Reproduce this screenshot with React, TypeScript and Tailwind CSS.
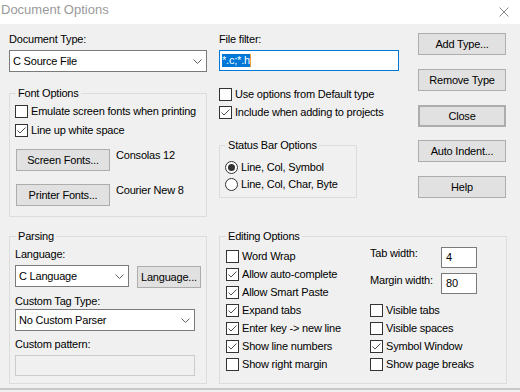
import type { ReactNode } from 'react'

function Check({ checked }: { checked?: boolean }) {
  return (
    <span className="flex h-[13px] w-[13px] shrink-0 items-center justify-center border border-[#333333] bg-white">
      {checked && (
        <svg width="11" height="11" viewBox="0 0 11 11">
          <path d="M1.5 5.5 L4 8 L9.5 2.5" fill="none" stroke="#3c3c3c" strokeWidth="0.9" />
        </svg>
      )}
    </span>
  )
}

function CheckRow({ label, checked, className = '' }: { label: string; checked?: boolean; className?: string }) {
  return (
    <div className={`flex h-[13px] items-center gap-[3px] ${className}`}>
      <Check checked={checked} />
      <span className="whitespace-nowrap">{label}</span>
    </div>
  )
}

function RadioRow({ label, on, className = '' }: { label: string; on?: boolean; className?: string }) {
  return (
    <div className={`flex h-[13px] items-center gap-[3px] ${className}`}>
      <span className="flex h-[13px] w-[13px] shrink-0 items-center justify-center rounded-full border border-[#333333] bg-white">
        {on && <span className="h-[7px] w-[7px] rounded-full bg-[#333333]" />}
      </span>
      <span className="whitespace-nowrap">{label}</span>
    </div>
  )
}

function Btn({ children, className = '' }: { children: ReactNode; className?: string }) {
  return (
    <button
      type="button"
      className={`flex h-[22px] shrink-0 items-center justify-center overflow-hidden whitespace-nowrap border border-[#adadad] bg-[#e1e1e1] ${className}`}
    >
      {children}
    </button>
  )
}

function Combo({ value, className = '' }: { value: string; className?: string }) {
  return (
    <div className={`flex h-[22px] items-center justify-between border border-[#7a7a7a] bg-white pl-[3px] pr-[4px] ${className}`}>
      <span className="whitespace-nowrap">{value}</span>
      <svg width="9" height="5" viewBox="0 0 9 5">
        <path d="M0.5 0.5 L4.5 4.5 L8.5 0.5" fill="none" stroke="#606060" strokeWidth="1" />
      </svg>
    </div>
  )
}

function Group({ label, className = '', children }: { label: string; className?: string; children: ReactNode }) {
  return (
    <div className={`border border-[#dcdcdc] ${className}`}>
      <div className="-mt-[7px] ml-[6px] w-fit bg-[#f0f0f0] px-[2px]">{label}</div>
      {children}
    </div>
  )
}

export default function App() {
  return (
    <div className="h-[392px] w-[520px] overflow-hidden bg-[#f0f0f0] font-['Liberation_Sans',Arial,sans-serif] text-[11px] leading-[13px] tracking-[-0.2px] text-black">
      <div className="flex h-[24px] items-start justify-between bg-white">
        <span className="pl-[1px] pt-[2px] text-[13px] leading-[16px] tracking-normal text-[#9a9a9a]">
          Document Options
        </span>
        <svg className="mr-[11px] mt-[7px]" width="10" height="10" viewBox="0 0 10 10">
          <path d="M0.5 0.5 L9.5 9.5 M9.5 0.5 L0.5 9.5" fill="none" stroke="#8a8a8a" strokeWidth="1" />
        </svg>
      </div>

      <div className="h-[366px] border-b-2 border-[#c8c8c8] pl-[9px] pt-[9px]">
        <div className="flex items-start">
          {/* left column */}
          <div className="flex w-[198px] flex-col">
            <div>Document Type:</div>
            <Combo value="C Source File" className="mt-[4px]" />
            <Group label="Font Options" className="mt-[21px] h-[124px]">
              <div className="pl-[5px]">
                <CheckRow label="Emulate screen fonts when printing" className="mt-[5px]" />
                <CheckRow label="Line up white space" checked className="mt-[6px]" />
                <div className="ml-[1px] mt-[12px] flex items-start gap-[6px]">
                  <Btn className="w-[94px]">Screen Fonts...</Btn>
                  <span>Consolas 12</span>
                </div>
                <div className="ml-[1px] mt-[13px] flex items-start gap-[6px]">
                  <Btn className="w-[94px]">Printer Fonts...</Btn>
                  <span>Courier New 8</span>
                </div>
              </div>
            </Group>
          </div>

          {/* middle column */}
          <div className="ml-[12px] flex w-[180px] flex-col">
            <div>File filter:</div>
            <div className="mt-[4px] flex h-[21px] items-center border border-[#0078d7] bg-white pl-[2px]">
              <span className="bg-[#0078d7] text-white">*.c;*.h</span>
              <span className="h-[13px] w-[1px] bg-[#f5a040]" />
            </div>
            <CheckRow label="Use options from Default type" className="mt-[17px]" />
            <CheckRow label="Include when adding to projects" checked className="mt-[5px]" />
            <Group label="Status Bar Options" className="mt-[26px] h-[53px] w-[138px]">
              <div className="pl-[5px]">
                <RadioRow label="Line, Col, Symbol" on className="mt-[9px]" />
                <RadioRow label="Line, Col, Char, Byte" className="mt-[4px]" />
              </div>
            </Group>
          </div>

          {/* buttons */}
          <div className="ml-[19px] flex w-[88px] flex-col">
            <Btn className="w-[88px]">Add Type...</Btn>
            <Btn className="mt-[14px] w-[88px]">Remove Type</Btn>
            <Btn className="mt-[14px] w-[88px] border-2 border-[#0078d7]">Close</Btn>
            <Btn className="mt-[13px] w-[88px]">Auto Indent...</Btn>
            <Btn className="mt-[14px] w-[88px]">Help</Btn>
          </div>
        </div>

        <div className="mt-[19px] flex items-start">
          <Group label="Parsing" className="h-[148px] w-[198px]">
            <div className="pl-[5px]">
              <div className="mt-[5px]">Language:</div>
              <div className="mt-[4px] flex items-start">
                <Combo value="C Language" className="w-[114px]" />
                <Btn className="ml-[8px] mt-[1px] w-[64px]">Language...</Btn>
              </div>
              <div className="mt-[7px]">Custom Tag Type:</div>
              <Combo value="No Custom Parser" className="mt-[1px] w-[180px]" />
              <div className="mt-[7px]">Custom pattern:</div>
              <div className="mt-[4px] h-[21px] w-[180px] border border-[#cccccc] bg-[#f0f0f0]" />
            </div>
          </Group>

          <Group label="Editing Options" className="ml-[12px] h-[148px] w-[288px]">
            <div className="mt-[4px] flex items-start">
              <div className="flex w-[150px] flex-col gap-[5px] pl-[6px] pt-[3px]">
                <CheckRow label="Word Wrap" />
                <CheckRow label="Allow auto-complete" checked />
                <CheckRow label="Allow Smart Paste" checked />
                <CheckRow label="Expand tabs" checked />
                <CheckRow label="Enter key -> new line" checked />
                <CheckRow label="Show line numbers" checked />
                <CheckRow label="Show right margin" />
              </div>
              <div className="flex flex-col">
                <div className="flex items-start">
                  <span className="w-[71px]">Tab width:</span>
                  <div className="flex h-[21px] w-[36px] items-center border border-[#7a7a7a] bg-white pl-[4px]">4</div>
                </div>
                <div className="mt-[5px] flex items-start">
                  <span className="mt-[1px] w-[71px]">Margin width:</span>
                  <div className="flex h-[21px] w-[36px] items-center border border-[#7a7a7a] bg-white pl-[4px]">80</div>
                </div>
                <div className="mt-[10px] flex flex-col gap-[5px]">
                  <CheckRow label="Visible tabs" />
                  <CheckRow label="Visible spaces" />
                  <CheckRow label="Symbol Window" checked />
                  <CheckRow label="Show page breaks" />
                </div>
              </div>
            </div>
          </Group>
        </div>
      </div>
    </div>
  )
}
